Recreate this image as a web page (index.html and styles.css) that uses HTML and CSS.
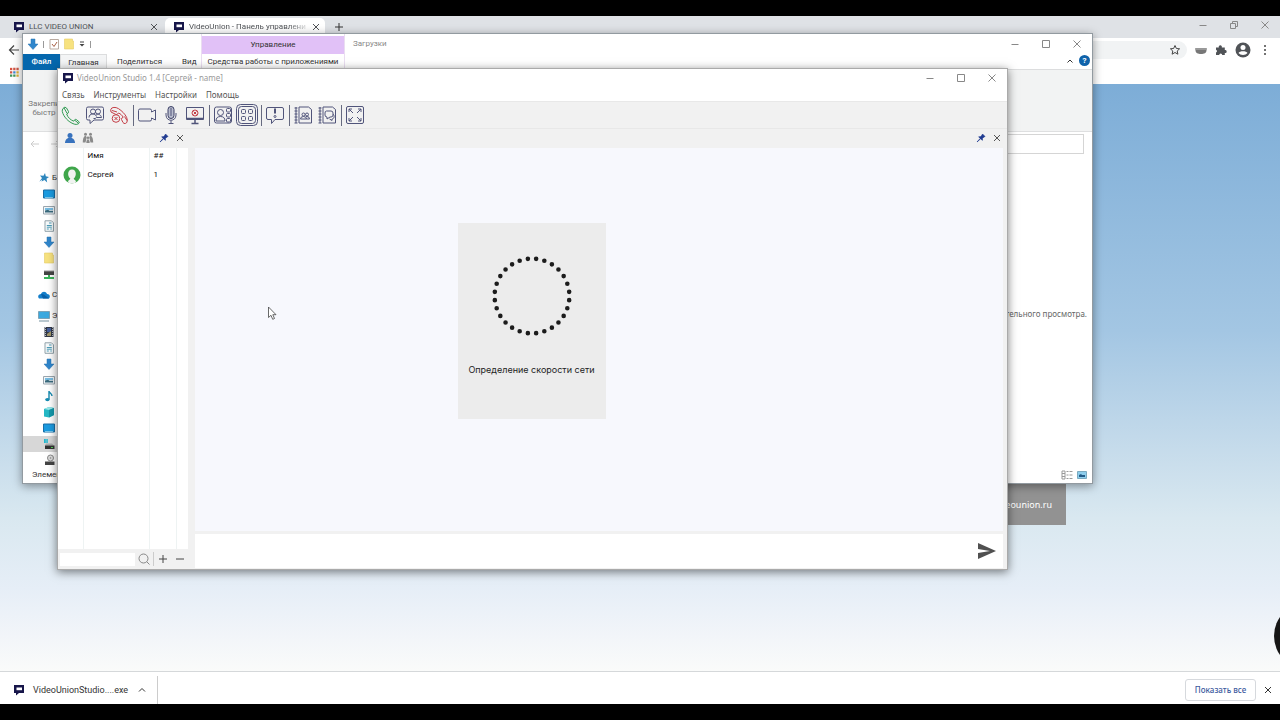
FILE: index.html
```html
<!DOCTYPE html>
<html lang="ru">
<head>
  <meta charset="utf-8">
  <title>VideoUnion Studio</title>
  <link rel="stylesheet" href="styles.css">
</head>
<body>
  <svg class="defs" aria-hidden="true">
    <symbol id="logo" viewBox="0 0 12 12"><path d="M1 1h10v8H6l-3 2.500V9H1z" fill="#17164a"/><rect x="3.500" y="3.500" width="5.500" height="2.700" fill="#fff"/></symbol>
    <symbol id="close" viewBox="0 0 12 12"><path d="M3 3l6 6M9 3l-6 6"/></symbol>
    <symbol id="wmin" viewBox="0 0 12 12"><path d="M2.500 6.500h7"/></symbol>
    <symbol id="wmax" viewBox="0 0 12 12"><path d="M2.500 2.500h7v7h-7z"/></symbol>
    <symbol id="wclose" viewBox="0 0 12 12"><path d="M2.500 2.500l7 7M9.500 2.500l-7 7"/></symbol>
    <symbol id="down" viewBox="0 0 12 12"><path d="M4 1h4v5h3l-5 5.500L1 6h3z" fill="#2f86cc" stroke="#2670ad" stroke-width=".5"/></symbol>
    <symbol id="folder" viewBox="0 0 12 12"><path d="M1.500 1h8v2h1v8h-9z" fill="#f7e27f" stroke="#e6cd67" stroke-width=".6"/></symbol>
    <symbol id="monitor" viewBox="0 0 12 12"><path d="M.5 2h11v8H.5z" fill="#1b9be0" stroke="#1b6ea6"/><path d="M2 9.500h8" stroke="#a8e3f8" stroke-width=".7"/></symbol>
    <symbol id="picture" viewBox="0 0 12 12"><path d="M.5 2.500h11v7.500H.5z" fill="#f2f7fa" stroke="#9aa6ae"/><path d="M2 4h8v2H2z" fill="#79bde2"/><path d="M2 8.500V6.500l3-.8 1.500 1H10v1.800z" fill="#38697c"/></symbol>
    <symbol id="doc" viewBox="0 0 12 12"><path d="M2 .8h6.500l2 2v8.500H2z" fill="#f7fafb" stroke="#93a3ab"/><path d="M6 3h2.500M3.800 5.500h5M3.800 7.200h5M3.800 9h2m1.500 0h1.500" stroke="#4c9db8"/></symbol>
    <symbol id="pin" viewBox="0 0 12 12"><path d="M7.500 2L10 4.500l-1 .4-1.600 1.600v1.800L5.600 6.800 2 10 5.200 6.400 3.700 4.800h1.700l1.700-1.700z" fill="#213c91" stroke="#213c91" stroke-width=".7"/></symbol>
  </svg>

  <div class="browser">
    <header class="tabstrip">
      <div class="tab"><svg><use href="#logo"/></svg><span>LLC VIDEO UNION</span><button aria-label="Закрыть вкладку"><svg><use href="#close"/></svg></button></div>
      <div class="tab tab-active"><svg><use href="#logo"/></svg><span>VideoUnion - Панель управлени</span><button aria-label="Закрыть вкладку"><svg><use href="#close"/></svg></button></div>
      <button class="new-tab" aria-label="Новая вкладка"><svg viewBox="0 0 12 12"><path d="M6 2v8M2 6h8"/></svg></button>
      <div class="controls">
        <button aria-label="Свернуть"><svg><use href="#wmin"/></svg></button>
        <button aria-label="Восстановить"><svg viewBox="0 0 12 12"><path d="M2.500 4.500h5v5h-5zM4.500 4.500v-2h5v5h-2"/></svg></button>
        <button aria-label="Закрыть"><svg><use href="#wclose"/></svg></button>
      </div>
    </header>
    <div class="navbar">
      <button aria-label="Назад"><svg viewBox="0 0 12 12"><path d="M11 6H2M6 1.500L1.500 6 6 10.500" stroke="#444" stroke-width="1.200"/></svg></button>
      <div class="omnibox"><button aria-label="Добавить в закладки"><svg viewBox="0 0 12 12"><path d="M6 1.500l1.400 3 3.200.3-2.400 2.200.7 3.200L6 8.500l-2.900 1.700.7-3.200L1.400 4.800l3.200-.3z" stroke="#444"/></svg></button></div>
      <button aria-label="Расширение"><svg viewBox="0 0 12 12"><path d="M.5 4h11v2.500C11.500 9 9 10 6 10S.5 9 .5 6.500z" fill="#777"/><path d="M.5 4h11v2H.5z" fill="#999"/></svg></button>
      <button aria-label="Расширения"><svg viewBox="0 0 12 12"><path d="M1 3.500h2.800a1.600 1.600 0 1 1 3 0h3v2.600a1.500 1.500 0 1 1 0 2.900v2H7.200a1.500 1.500 0 0 0-3 0H1V8.600a1.500 1.500 0 0 0 0-2.800z" fill="#505357"/></svg></button>
      <button class="wide" aria-label="Профиль"><svg viewBox="0 0 16 16"><circle cx="8" cy="8" r="7.500" fill="#505357"/><circle cx="8" cy="5.500" r="2.500" fill="#fff"/><path d="M3.500 11c1-2.500 8-2.500 9 0-2 2.500-7 2.500-9 0z" fill="#fff"/></svg></button>
      <button aria-label="Меню"><svg viewBox="0 0 12 12"><g fill="#444" stroke="none"><circle cx="6" cy="2" r="1"/><circle cx="6" cy="6" r="1"/><circle cx="6" cy="10" r="1"/></g></svg></button>
    </div>
    <div class="bookmarks">
      <button aria-label="Приложения"><svg viewBox="0 0 12 12"><path d="M2 3h2.300" stroke="#d9503f" stroke-width="2.300"/><path d="M5.200 3h2.300M8.400 3h2.300M2 6.400h2.300" stroke="#cf5746" stroke-width="2.300"/><path d="M5.200 6.400h2.300" stroke="#4285d4" stroke-width="2.300"/><path d="M8.400 6.400h2.300M8.400 9.700h2.300" stroke="#e0ae35" stroke-width="2.300"/><path d="M2 9.700h5.500" stroke="#43945a" stroke-width="2.300" stroke-dasharray="2.300 .9"/></svg></button>
    </div>
    <main class="page">
      <div class="chat-bubble"></div>
      <a class="site-link" href="#">eounion.ru</a>
    </main>
    <footer class="downloads">
      <button class="download"><svg><use href="#logo"/></svg><span>VideoUnionStudio....exe</span><svg viewBox="0 0 12 12"><path d="M3 7.500l3-3 3 3"/></svg></button>
      <button class="show-all">Показать все</button>
      <button class="shelf-close" aria-label="Закрыть"><svg><use href="#close"/></svg></button>
    </footer>
  </div>

  <section class="explorer">
    <header class="explorer-head">
      <div class="ribbon-left">
        <div class="quickbar">
          <svg><use href="#down"/></svg><i></i>
          <svg viewBox="0 0 12 12"><path d="M2 1.500h8.500v9.500H2z" fill="#fff" stroke="#b8aaa0"/><path d="M4 6l2 2.500L9 4" stroke="#a96045"/></svg>
          <svg><use href="#folder"/></svg>
          <svg class="caret" viewBox="0 0 8 12"><path d="M2 4h4" stroke="#444"/><path d="M1.500 6h5L4 8.500z" fill="#444"/></svg><i></i>
        </div>
        <nav class="ribbon-tabs">
          <button class="file">Файл</button><button class="current">Главная</button><button>Поделиться</button><button>Вид</button>
        </nav>
      </div>
      <div class="context">
        <span>Управление</span>
        <button>Средства работы с приложениями</button>
      </div>
      <h2>Загрузки</h2>
      <div class="explorer-right">
        <div class="controls">
          <button aria-label="Свернуть"><svg><use href="#wmin"/></svg></button>
          <button aria-label="Развернуть"><svg><use href="#wmax"/></svg></button>
          <button aria-label="Закрыть"><svg><use href="#wclose"/></svg></button>
        </div>
        <div class="help">
          <button aria-label="Свернуть ленту"><svg viewBox="0 0 12 12"><path d="M3.500 7.500L6 5l2.500 2.500"/></svg></button>
          <button class="help-mark" aria-label="Справка">?</button>
        </div>
      </div>
    </header>
    <div class="ribbon"><p>Закрепи<br>быстр</p></div>
    <div class="address">
      <svg viewBox="0 0 12 12"><path d="M10 6H2M5 3L2 6l3 3"/></svg>
      <svg viewBox="0 0 12 12"><path d="M2 6h8M7 3l3 3-3 3"/></svg>
      <input type="text" aria-label="Адрес">
    </div>
    <div class="explorer-body">
      <ul class="tree">
        <li class="root"><svg viewBox="0 0 12 12"><path d="M7 1l.8 3.200L11 5 8.500 6.800l.7 3.600L6.500 8 3.500 9.500l.8-2-3 2.300L4 6 2 3.500l3.500.3z" fill="#2d86bd"/></svg>Б</li>
        <li><svg><use href="#monitor"/></svg></li>
        <li><svg><use href="#picture"/></svg></li>
        <li><svg><use href="#doc"/></svg></li>
        <li><svg><use href="#down"/></svg></li>
        <li><svg><use href="#folder"/></svg></li>
        <li><svg viewBox="0 0 12 12"><path d="M1 3h10v4H1z" fill="#444"/><path d="M1 3h10" stroke="#999"/><path d="M6 7v3M1 10h10" stroke="#3cb45a" stroke-width="2"/></svg></li>
        <li class="root spaced"><svg viewBox="0 0 12 12"><path d="M1 9.500C-1 7 1 5 3 5c1-3 5-3 6 0 3 0 3.500 3 2 4.500z" fill="#147fcb"/><path d="M3 5c2-.5 4 1 8 4.500H5z" fill="#0960a8"/></svg>С</li>
        <li class="root spaced"><svg viewBox="0 0 12 12"><path d="M.5 1.500h11v7H.5z" fill="#3ba9df" stroke="#7ca4b8"/><path d="M1 11h10" stroke="#7793a1"/></svg>Э</li>
        <li><svg viewBox="0 0 12 12"><path d="M1.500 1h9v10h-9z" fill="#323845"/><path d="M2.500 1v10M9.500 1v10" stroke="#b1b8c5" stroke-dasharray="1 1"/><path d="M4 2h4v4H4z" fill="#435d9b"/><path d="M4 8l4-3v5H4z" fill="#a2976a"/></svg></li>
        <li><svg><use href="#doc"/></svg></li>
        <li><svg><use href="#down"/></svg></li>
        <li><svg><use href="#picture"/></svg></li>
        <li><svg viewBox="0 0 12 12"><path d="M6 9.500V1c0 2 3 2 3 5" stroke="#168bb1" stroke-width="1.400"/><ellipse cx="4.400" cy="9.600" rx="2.200" ry="1.700" fill="#168bb1"/></svg></li>
        <li><svg viewBox="0 0 12 12"><path d="M1 3l5-2 5 1v7l-5 2.500-5-1z" fill="#25b8c5"/><path d="M1 3l5-2 5 1-5 2z" fill="#9ce7e8"/><path d="M6 4l5-2v7l-5 2.500z" fill="#1598ab"/></svg></li>
        <li><svg><use href="#monitor"/></svg></li>
        <li class="selected"><svg viewBox="0 0 12 12"><path d="M1 1h1.800v4H1zM3.300 1h1.500v4H3.300z" fill="#22b8cf"/><path d="M3 5.500h6l2 2H2z" fill="#aaa"/><path d="M2 7.500h9.500V11H2z" fill="#333"/><path d="M8 9.500h2" stroke="#5c5"/></svg></li>
        <li><svg viewBox="0 0 12 12"><circle cx="7.500" cy="4" r="3" fill="#ddd" stroke="#888"/><circle cx="7.500" cy="4" r=".8" fill="#888"/><path d="M2 7.500h9.500V11H2z" fill="#444"/></svg></li>
      </ul>
      <p class="preview">тельного просмотра.</p>
    </div>
    <footer class="statusbar">
      <span>Элемен</span>
      <button aria-label="Таблица"><svg viewBox="0 0 12 12"><path d="M1 2h3v8H1zM1 4.500h3M1 7.500h3M5.500 2.500h2M8.500 2.500h3M5.500 6h2M8.500 6h3M5.500 9.500h2M8.500 9.500h3" stroke="#999"/></svg></button>
      <button aria-label="Эскизы"><svg viewBox="0 0 12 12"><path d="M1.500 2.500h9v7h-9z" fill="#8dcdec" stroke="#7aaac0"/><path d="M3 8V6l2-1 1 1h3v2z" fill="#225b87"/></svg></button>
    </footer>
  </section>

  <section class="studio">
    <header class="studio-title">
      <svg><use href="#logo"/></svg><h1>VideoUnion Studio 1.4 [Сергей - name]</h1>
      <div class="controls">
        <button aria-label="Свернуть"><svg><use href="#wmin"/></svg></button>
        <button aria-label="Развернуть"><svg><use href="#wmax"/></svg></button>
        <button aria-label="Закрыть"><svg><use href="#wclose"/></svg></button>
      </div>
    </header>
    <nav class="menu"><button>Связь</button><button>Инструменты</button><button>Настройки</button><button>Помощь</button></nav>
    <div class="toolbar">
      <button aria-label="Позвонить"><svg class="green" viewBox="0 0 24 24"><path d="M4 5.500q2-2.500 3.500-.5l2 3.500q.5 1.500-1.800 2.500c1 3.500 4 6 7 7.200 1-2 2-2.200 3-1.400l2.200 1.900q1.200 1.200-.7 2.200-2 1-4 .2C9 19 4.500 13.500 3.300 8.500Q3 7 4 5.500zM5 4.800l3 5.500M15.800 17.300l3.800 3"/></svg></button>
      <button aria-label="Конференция"><svg viewBox="0 0 24 24"><path d="M5 4h14q1.500 0 1.500 1.500v10q0 1.500-1.500 1.500h-8l-4 3.500V17H5q-1.500 0-1.500-1.500v-10Q3.500 4 5 4z"/><circle cx="10" cy="8.500" r="2.500"/><circle cx="15" cy="8.500" r="2.500"/><path d="M6 14.500c0-4.500 6.500-4.500 7.500-1M13 12c2-1.500 5-.5 5.500 2.500h-5q-1 1.500-3 1"/></svg></button>
      <button aria-label="Завершить"><svg class="red" viewBox="0 0 24 24"><path d="M4 9q-1-2.500.8-4Q9 3 14 7.500c3 2.500 6 6 6.300 9.500q.2 3-2 3.500-1.500.3-2.300-1l-1.500-3q-.5-1.500 1.700-2.200c-1-2-2.700-3.500-4.700-4.300-1 1.500-2 2-3.200 1.200zM5 7.500l5 1.500M17.500 13.500l2.500 4"/><circle cx="9" cy="15.500" r="3.800"/><path d="M7.500 14l3 3m0-3l-3 3"/></svg></button>
      <span class="sep"></span>
      <button aria-label="Камера"><svg viewBox="0 0 24 24"><path d="M5 6h10q1.500 0 1.500 1.500V9l4-2v10l-4-2v1.500q0 1.500-1.500 1.500H5q-1.500 0-1.500-1.500v-9Q3.500 6 5 6z"/></svg></button>
      <button aria-label="Микрофон"><svg viewBox="0 0 24 24"><rect x="9" y="3.500" width="6" height="12" rx="3" fill="#b9bdce" stroke="#3c4066"/><path d="M12 5v8M7 10v2c0 7 10 7 10 0v-2M12 17.500V20M9.500 20.500h5"/></svg></button>
      <button aria-label="Экран"><svg viewBox="0 0 24 24"><path d="M3.500 4.500h17v12h-17z"/><path d="M3.500 15.500h17M12 17v3M8.500 20.500h7" stroke-width="1.500"/><g class="red"><circle cx="12" cy="10" r="3"/><path d="M10.500 8.500l3 3m0-3l-3 3"/></g></svg></button>
      <span class="sep"></span>
      <button aria-label="Участники"><svg viewBox="0 0 24 24"><rect x="3.500" y="4" width="17" height="16" rx="2"/><circle cx="9.500" cy="9.500" r="3"/><path d="M5 18q0-4.500 4.500-4.500T14 18z"/><rect x="15.500" y="5.500" width="4" height="3.500" rx="1"/><rect x="15.500" y="10.500" width="4" height="3.500" rx="1"/><rect x="15.500" y="15.500" width="4" height="3.500" rx="1"/></svg></button>
      <button class="pressed" aria-label="Сетка"><svg viewBox="0 0 24 24"><rect x="1.500" y="1.500" width="21" height="21" rx="4"/><rect x="3.500" y="3.500" width="17" height="17" rx="3"/><rect x="6.500" y="6.500" width="4" height="4" rx="1"/><rect x="13.500" y="6.500" width="4" height="4" rx="1"/><rect x="6.500" y="13.500" width="4" height="4" rx="1"/><rect x="13.500" y="13.500" width="4" height="4" rx="1"/></svg></button>
      <span class="sep"></span>
      <button aria-label="Уведомление"><svg viewBox="0 0 24 24"><path d="M5 4.500h14q1.500 0 1.500 1.500v9q0 1.500-1.500 1.500h-7l-3.500 4v-4H5Q3.500 16.500 3.500 15V6q0-1.500 1.500-1.500z"/><path d="M12 5.500v5" stroke-width="2"/><circle cx="12" cy="13.500" r="1"/></svg></button>
      <span class="sep"></span>
      <button aria-label="Адресная книга"><svg viewBox="0 0 24 24"><path d="M8 4h9.500l3 2.500V20H8zM5 4v16"/><path d="M3.500 5h3M3.500 8h3M3.500 11h3M3.500 14h3M3.500 17h3M3.500 20h3"/><circle cx="12.500" cy="11.500" r="1.500"/><circle cx="16" cy="11.500" r="1.500"/><path d="M9.500 16q0-2.500 3-2.500t3 2.500zM15 13.500q3.500-.5 3.500 2.500h-3"/></svg></button>
      <button aria-label="Журнал"><svg viewBox="0 0 24 24"><path d="M8 4h9.500l3 2.500V20H8zM5 4v16"/><path d="M3.500 5h3M3.500 8h3M3.500 11h3M3.500 14h3M3.500 17h3M3.500 20h3"/><path d="M11.500 8h4.500q2 0 2 2v2q0 2-2 2h-1l-3 2v-2q-2 0-2-2v-2q0-2 1.500-2z"/><path d="M18 11c2 2 1 5-1 5v1.500L14.500 16"/></svg></button>
      <span class="sep"></span>
      <button aria-label="Во весь экран"><svg viewBox="0 0 24 24"><rect x="3.500" y="3.500" width="17" height="17" rx="1.500"/><path d="M6 9V6h3M15 6h3v3M18 15v3h-3M9 18H6v-3M6 6l4 4M18 6l-4 4M18 18l-4-4M6 18l4-4"/></svg></button>
    </div>
    <div class="panel-heads">
      <div class="contacts-head">
        <button aria-label="Контакты"><svg viewBox="0 0 12 12"><circle cx="6" cy="3.500" r="2.500" fill="#3872bd"/><path d="M1 11c0-7 10-7 10 0z" fill="#3872bd"/></svg></button>
        <button aria-label="Группы"><svg viewBox="0 0 12 12"><g fill="#8a8a8a" stroke="none"><circle cx="3.500" cy="2.300" r="1.500"/><circle cx="8.500" cy="2.300" r="1.500"/><circle cx="6" cy="5.800" r="1.300"/><path d="M.8 10.500C.8 3 4.500 3 4.700 5.500L3.500 10.500zM11.200 10.500C11.200 3 7.500 3 7.300 5.500l1.200 5zM4.300 11c0-5 3.400-5 3.400 0z"/></g></svg></button>
      </div>
      <div class="dock"><button aria-label="Закрепить"><svg><use href="#pin"/></svg></button><button aria-label="Закрыть"><svg><use href="#close"/></svg></button></div>
      <div class="dock dock-right"><button aria-label="Закрепить"><svg><use href="#pin"/></svg></button><button aria-label="Закрыть"><svg><use href="#close"/></svg></button></div>
    </div>
    <div class="studio-body">
      <aside class="contacts">
        <table>
          <thead><tr><th class="c-icon"></th><th>Имя</th><th class="c-num">##</th><th class="c-end"></th></tr></thead>
          <tbody>
            <tr class="person"><td class="c-icon"><svg viewBox="0 0 18 18"><circle cx="9" cy="9" r="8.500" fill="#3fa64b"/><path d="M5 16c0-2 2-2 2.300-3.500C4 10 4.500 3.500 9 3.500s5 6.500 1.700 9C11 14 13 14 13 16c-2 2-6 2-8 0z" fill="#f1f3f1"/></svg></td><td>Сергей</td><td>1</td><td></td></tr>
            <tr><td></td><td></td><td></td><td></td></tr>
          </tbody>
        </table>
        <div class="search">
          <input type="text" aria-label="Поиск">
          <button aria-label="Найти"><svg viewBox="0 0 12 12"><circle cx="5.500" cy="5.500" r="4.500"/><path d="M8.800 8.800l2.700 2.700"/></svg></button>
          <i></i>
          <button class="strong" aria-label="Добавить"><svg viewBox="0 0 12 12"><path d="M6 2v8M2 6h8"/></svg></button>
          <button class="strong" aria-label="Удалить"><svg viewBox="0 0 12 12"><path d="M2 6h8"/></svg></button>
        </div>
      </aside>
      <div class="conference">
        <div class="stage"></div>
        <div class="message">
          <input type="text" aria-label="Сообщение">
          <button aria-label="Отправить"><svg viewBox="0 0 20 16"><path d="M1 0l18 8-18 8V10l12-2L1 6z" fill="#505050"/></svg></button>
        </div>
      </div>
    </div>
    <div class="speed" role="status">
      <svg viewBox="0 0 80 80"><circle cx="40" cy="40" r="37.400" pathLength="28"/></svg>
      <p>Определение скорости сети</p>
    </div>
  </section>

  <svg class="cursor" viewBox="0 0 10 15"><path d="M1.500 1v10.500L4 9.300l1.700 4 1.800-.8-1.700-3.800H9z" fill="#fff" stroke="#444" stroke-width=".8"/></svg>
</body>
</html>
```
FILE: styles.css
```css
* {
  box-sizing: border-box;
}

body {
  margin: 0;
  position: relative;
  height: 100vh;
  overflow: hidden;
  background: #000;
  color: #333;
  font: 8px/12px Roboto, "Noto Sans", sans-serif;
}

button {
  display: flex;
  flex: none;
  align-items: center;
  justify-content: center;
  padding: 0;
  border: 0;
  background: none;
  color: inherit;
  font: inherit;
  white-space: nowrap;
}

input {
  min-width: 0;
  padding: 0 4px;
  border: 0;
  background: #fff;
  font: inherit;
}

svg {
  display: block;
  flex: none;
  width: 12px;
  height: 12px;
  fill: none;
  stroke: currentColor;
  stroke-width: 1;
}

svg [fill]:not([stroke]) { stroke: none; }
p, h1, h2, ul { margin: 0; padding: 0; font: inherit; }
.defs { position: absolute; width: 0; height: 0; }

/* these labels are set in the wider face */
.menu,
.preview,
.site-link,
.show-all,
.studio-title {
  font-family: "Noto Sans", sans-serif;
}

/* browser */
.browser {
  display: flex;
  flex-direction: column;
  height: 100%;
  padding: 16px 0;
}

.tabstrip {
  display: flex;
  align-items: flex-end;
  height: 22px;
  padding-left: 5px;
  background: #dfe2e6;
}

.tab {
  display: flex;
  align-items: center;
  gap: 4px;
  width: 160px;
  height: 20px;
  padding: 0 5px 2px 8px;
  color: #505357;
}

.tab span {
  flex: 1;
  white-space: nowrap;
}

.tab-active {
  border-radius: 5px 5px 0 0;
  background: #fff;
}

.tab-active span {
  mask-image: linear-gradient(to right, #000 85%, rgba(0, 0, 0, .2));
}

.new-tab { height: 20px; margin-left: 8px; padding-bottom: 2px; }

.controls {
  display: flex;
  gap: 19px;
  margin-left: auto;
  color: #888;
}

.tabstrip .controls { align-self: center; padding: 0 9px 4px 0; }

.navbar {
  display: flex;
  align-items: center;
  gap: 8px;
  height: 24px;
  padding: 0 9px 0 8px;
  background: #fff;
}

.omnibox {
  display: flex;
  flex: 1;
  justify-content: flex-end;
  align-items: center;
  height: 18px;
  padding-right: 6px;
  border-radius: 9px;
  background: #f1f3f4;
}

.wide svg { width: 16px; height: 16px; }

.bookmarks {
  display: flex;
  align-items: center;
  height: 22px;
  padding: 0 8px 3px;
  background: #fff;
}

.page {
  position: relative;
  flex: 1;
  background: linear-gradient(#7dadd7, #a3c6e3 42%, #c2d9ea 60%, #d9e8f0 74%, #e6eef7 86%, #f2f5f9 94%, #fafbfa);
}

.site-link {
  position: absolute;
  top: 399px;
  right: 214px;
  width: 100px;
  height: 42px;
  padding: 16px 14px 0;
  background: #929292;
  color: #fff;
  font-size: 9px;
  text-align: right;
  text-decoration: none;
}

.chat-bubble {
  position: absolute;
  right: -60px;
  bottom: 2px;
  width: 66px;
  height: 66px;
  border-radius: 50%;
  background: #161616;
}

.downloads {
  display: flex;
  align-items: center;
  height: 33px;
  padding: 4px 6px 0 13px;
  border-top: 1px solid #d5d8da;
  background: #fff;
}

.download {
  gap: 8px;
  height: 28px;
  padding-right: 9px;
  border-right: 1px solid #ccc;
  font-size: 9px;
}

.download span { width: 95px; text-align: left; }

.show-all {
  width: 71px;
  height: 22px;
  margin-left: auto;
  border: 1px solid #d6d9dd;
  border-radius: 3px;
  color: #3c5a9e;
  font-weight: 500;
}

.shelf-close { margin-left: 6px; }

/* file explorer */
.explorer {
  position: absolute;
  top: 33px;
  left: 22px;
  right: 187px;
  height: 451px;
  display: flex;
  flex-direction: column;
  border: 1px solid #929aa0;
  background: #fff;
  box-shadow: 0 2px 9px rgba(0, 0, 0, .4);
}

.explorer-head {
  display: flex;
  height: 36px;
  border-bottom: 1px solid #dcddde;
}

.ribbon-left { width: 178px; }

.quickbar {
  display: flex;
  align-items: center;
  gap: 3px;
  height: 20px;
  padding-left: 4px;
}

.quickbar i {
  width: 1px;
  height: 7px;
  margin: 0 1px;
  background: #999;
}

.quickbar .caret { width: 8px; }

.ribbon-tabs { display: flex; height: 16px; }
.ribbon-tabs button { padding: 0 10px; }
.ribbon-tabs .file { width: 37px; background: #0567ad; color: #fff; font-weight: 500; }
.ribbon-tabs .current { width: 47px; border: 1px solid #dcddde; border-bottom: 0; background: #f4f5f6; }

.context {
  width: 144px;
  padding-top: 2px;
  border-right: 1px solid #eaddf1;
  border-left: 1px solid #eaddf1;
  text-align: center;
}

.context span { display: block; height: 18px; background: #e1c1f7; line-height: 18px; }
.context button { width: 100%; height: 16px; }
.explorer h2 { padding: 4px 8px; color: #888; }
.explorer-right { margin-left: auto; }
.explorer-right .controls { height: 19px; padding: 0 9px; }

.help {
  display: flex;
  justify-content: flex-end;
  gap: 3px;
  padding: 2px;
}

.help-mark {
  width: 11px;
  height: 11px;
  border-radius: 50%;
  background: #0e62aa;
  color: #fff;
  font-weight: 700;
}

.ribbon {
  height: 62px;
  padding: 29px 5px;
  border-bottom: 1px solid #dedfe0;
  background: #f2f3f3;
  color: #777;
  line-height: 9px;
}

.ribbon p { width: 32px; text-align: center; }

.address {
  display: flex;
  align-items: center;
  gap: 8px;
  height: 26px;
  padding: 0 8px 0 6px;
  color: #ccc;
}

.address input { flex: 1; height: 20px; border: 1px solid #d5d5d5; }

.explorer-body {
  display: flex;
  flex: 1;
  align-items: center;
  justify-content: space-between;
  padding-top: 13px;
}

.tree { align-self: flex-start; width: 80px; list-style: none; }

.tree li {
  display: flex;
  align-items: center;
  gap: 2px;
  height: 16px;
  padding-left: 20px;
}

.tree .root { padding-left: 15px; }
.tree .spaced { margin-top: 5px; }
.tree .selected { background: #d7d7d7; }
.preview { padding: 0 5px 10px; color: #666; }

.statusbar {
  display: flex;
  align-items: center;
  gap: 3px;
  height: 16px;
  padding: 0 4px 0 9px;
}

.statusbar span { flex: 1; }

/* studio window */
.studio {
  position: absolute;
  top: 68px;
  left: 57px;
  right: 272px;
  height: 502px;
  display: flex;
  flex-direction: column;
  border: 1px solid #aaa;
  background: #f1f1f1;
  box-shadow: 0 2px 9px rgba(0, 0, 0, .5);
}

.studio-title {
  display: flex;
  align-items: center;
  gap: 3px;
  height: 18px;
  padding: 0 9px 0 4px;
  background: #fff;
  color: #999;
}

.menu {
  display: flex;
  gap: 9px;
  height: 15px;
  padding: 1px 4px 0;
  border-bottom: 1px solid #e8e8e8;
  background: #fff;
  color: #555;
}

.toolbar {
  display: flex;
  align-items: center;
  height: 27px;
  padding-left: 1px;
  border-bottom: 1px solid #e8e8e8;
  color: #50547a;
}

.toolbar svg { width: 24px; height: 24px; }
.toolbar .green { color: #329b54; }
.toolbar .red { color: #c43e47; stroke: currentColor; }

.sep {
  width: 4px;
  height: 21px;
  border: solid #f1f1f1;
  border-width: 0 1px 0 2px;
  background: #666a80;
}

.panel-heads {
  display: flex;
  align-items: center;
  height: 19px;
  padding: 0 4px 2px 6px;
}

.contacts-head { display: flex; gap: 6px; width: 94px; }
.dock { display: flex; gap: 4px; color: #555; }
.dock-right { margin-left: auto; }
.studio-body { display: flex; flex: 1; min-height: 0; }

.contacts {
  display: flex;
  flex-direction: column;
  width: 130px;
  background: #fff;
}

.contacts table {
  flex: 1;
  width: 100%;
  height: 400px;
  border-collapse: collapse;
  table-layout: fixed;
  color: #111;
}

.contacts th,
.contacts td {
  padding: 0 4px;
  border-right: 1px solid #eef3f3;
  font-weight: 400;
  text-align: left;
}

.contacts th { height: 16px; }
.contacts .person td { height: 22px; }
.contacts .c-icon { width: 25px; padding: 0 5px; }
.contacts .person svg { width: 18px; height: 18px; }
.contacts .c-num { width: 27px; }
.contacts .c-end { width: 12px; }
.contacts th:last-child,
.contacts td:last-child { border: 0; }

.search {
  display: flex;
  align-items: center;
  gap: 3px;
  height: 20px;
  padding: 0 2px;
  background: #f1f1f1;
  color: #888;
}

.search input { flex: 1; height: 13px; }
.search i { width: 1px; height: 14px; background: #ccc; }
.search .strong { color: #444; }
.search .strong + .strong { margin-left: 2px; }

.conference {
  display: flex;
  flex: 1;
  flex-direction: column;
  padding: 0 4px 1px 7px;
}

.stage { flex: 1; background: #f7f8fd; }

.message {
  display: flex;
  align-items: center;
  height: 34px;
  margin-top: 3px;
  padding-right: 6px;
  background: #fff;
}

.message input { flex: 1; height: 100%; }
.message svg { width: 20px; height: 16px; }

.speed {
  position: absolute;
  inset: 4px 2px 0 0;
  display: flex;
  flex-direction: column;
  align-items: center;
  gap: 28px;
  width: 148px;
  height: 196px;
  margin: auto;
  padding-top: 33px;
  background: #ececec;
  color: #222;
  font: 9px/12px Inter, "Noto Sans", sans-serif;
}

.speed svg {
  width: 80px;
  height: 80px;
  stroke: #1c1c1c;
  stroke-width: 4.6;
  stroke-linecap: round;
  stroke-dasharray: 0 1;
  stroke-dashoffset: -.5;
}

.cursor {
  position: absolute;
  top: 306px;
  left: 267px;
  width: 10px;
  height: 15px;
}
```
